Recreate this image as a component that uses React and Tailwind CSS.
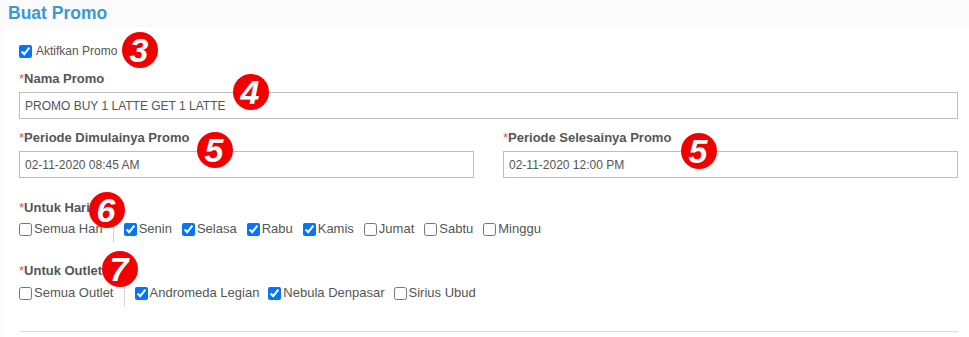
import React from 'react';

const days = [
  { name: 'Senin', on: true },
  { name: 'Selasa', on: true },
  { name: 'Rabu', on: true },
  { name: 'Kamis', on: true },
  { name: 'Jumat', on: false },
  { name: 'Sabtu', on: false },
  { name: 'Minggu', on: false },
];

const outlets = [
  { name: 'Andromeda Legian', on: true },
  { name: 'Nebula Denpasar', on: true },
  { name: 'Sirius Ubud', on: false },
];

function Label({ children, className = '' }) {
  return (
    <div className={"text-[13px] leading-4 font-bold text-[#555] " + className}>
      <span className="text-[#e05252] font-normal">*</span>{children}
    </div>
  );
}

function Check({ label, checked }) {
  return (
    <label className="flex items-center gap-[2px] text-[13px] leading-4 text-[#555]">
      <input type="checkbox" defaultChecked={checked} className="m-0 w-[13px] h-[13px]" />
      <span>{label}</span>
    </label>
  );
}

// red numbered marker laid over the form
function Badge({ n, x, y }) {
  return (
    <div
      className="absolute w-[36px] h-[36px] rounded-full bg-[#f20000] flex items-center justify-center text-white font-bold italic text-[34px] leading-none pr-[2px]"
      style={{ left: x - 18, top: y - 18, fontFamily: '"Liberation Sans", Arial, sans-serif' }}
    >
      {n}
    </div>
  );
}

export default function App() {
  return (
    <div className="relative w-[969px] h-[337px] overflow-hidden bg-[#fbfbfb]" style={{ fontFamily: '"Liberation Sans", Arial, sans-serif' }}>
      {/* Header */}
      <div className="h-[28px] pl-[8px] pt-[3px]">
        <h1 className="text-[17.5px] leading-5 font-bold text-[#3d97d5]">Buat Promo</h1>
      </div>

      {/* Panel */}
      <div className="ml-[4px] bg-white h-[309px] pl-[15px] pr-[11px] pt-[15px] flex flex-col">
        <label className="flex items-center gap-[4px] text-[12px] leading-4 text-[#555]">
          <input type="checkbox" defaultChecked className="m-0 w-[13px] h-[13px]" />
          <span>Aktifkan Promo</span>
        </label>

        <Label className="mt-[12px]">Nama Promo</Label>
        <div className="mt-[5px] h-[27px] border border-[#bdbdbd] px-[5px] flex items-center text-[12px] text-[#555]">
          PROMO BUY 1 LATTE GET 1 LATTE
        </div>

        <div className="grid grid-cols-2 gap-x-[29px] mt-[11px]">
          <div>
            <Label>Periode Dimulainya Promo</Label>
            <div className="mt-[5px] h-[27px] border border-[#bdbdbd] px-[5px] flex items-center text-[12px] text-[#555]">
              02-11-2020 08:45 AM
            </div>
          </div>
          <div>
            <Label>Periode Selesainya Promo</Label>
            <div className="mt-[5px] h-[27px] border border-[#bdbdbd] px-[5px] flex items-center text-[12px] text-[#555]">
              02-11-2020 12:00 PM
            </div>
          </div>
        </div>

        <Label className="mt-[22px]">Untuk Hari</Label>
        <div className="mt-[5px] flex items-start">
          <Check label="Semua Hari" checked={false} />
          <div className="w-px h-[24px] bg-[#d5d5d5] ml-[10px] mr-[10px] -mt-[2px]" />
          <div className="flex items-center gap-x-[10px]">
            {days.map((d) => (
              <Check key={d.name} label={d.name} checked={d.on} />
            ))}
          </div>
        </div>

        <Label className="mt-[20px]">Untuk Outlet</Label>
        <div className="mt-[6px] flex items-start">
          <Check label="Semua Outlet" checked={false} />
          <div className="w-px h-[24px] bg-[#d5d5d5] ml-[10px] mr-[10px] -mt-[2px]" />
          <div className="flex items-center gap-x-[9px]">
            {outlets.map((o) => (
              <Check key={o.name} label={o.name} checked={o.on} />
            ))}
          </div>
        </div>

        <div className="mt-auto mb-[5px] border-t border-[#dcdcdc]" />
      </div>

      <Badge n="3" x={140} y={50} />
      <Badge n="4" x={251} y={92} />
      <Badge n="5" x={215} y={150} />
      <Badge n="5" x={699} y={151} />
      <Badge n="6" x={107} y={210} />
      <Badge n="7" x={120} y={269} />
    </div>
  );
}
